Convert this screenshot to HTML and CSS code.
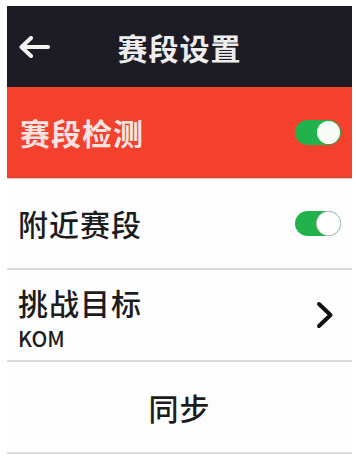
FILE: index.html
```html
<!DOCTYPE html>
<html lang="zh-CN">
<head>
<meta charset="utf-8">
<link rel="stylesheet" href="styles.css">
</head>
<body>
<div class="screen">
  <div class="header">
    <div class="back">
      <svg width="32" height="22" viewBox="0 0 32 22"><path d="M30 11H4M13 2L3.5 11L13 20" fill="none" stroke="#f2f2f2" stroke-width="4" stroke-linecap="round" stroke-linejoin="round"/></svg>
    </div>
    <div class="title">赛段设置</div>
    <div></div>
  </div>
  <div class="row row-active">
    <span class="label">赛段检测</span>
    <span class="toggle"><span class="knob"></span></span>
  </div>
  <div class="row">
    <span class="label">附近赛段</span>
    <span class="toggle"><span class="knob knob-ring"></span></span>
  </div>
  <div class="row row-chevron">
    <div class="stack">
      <span class="label">挑战目标</span>
      <span class="sub">KOM</span>
    </div>
    <svg width="18" height="28" viewBox="0 0 18 28"><path d="M3 3L14.5 14L3 25" fill="none" stroke="#111" stroke-width="4" stroke-linecap="round" stroke-linejoin="round"/></svg>
  </div>
  <div class="row row-center">
    <span class="label">同步</span>
  </div>
</div>
</body>
</html>
```
FILE: styles.css
```css
html, body {
  margin: 0;
  padding: 0;
  background: #ffffff;
}
body {
  font-family: "Noto Sans CJK SC", "Noto Sans", sans-serif;
}
.screen {
  margin: 6px 0 0 7px;
  width: 345px;
  background: #fdfdfd;
}
.header {
  height: 81px;
  background: #1d1c24;
  display: grid;
  grid-template-columns: 1fr auto 1fr;
  align-items: center;
}
.back {
  padding-left: 11px;
  display: flex;
  align-items: center;
}
.title {
  color: #ededed;
  font-size: 30px;
  font-weight: 700;
  line-height: 36px;
  letter-spacing: 1px;
}
.row {
  height: 90px;
  border-bottom: 2px solid #dcdcdc;
  display: flex;
  align-items: center;
  justify-content: space-between;
  padding: 0 11px 0 11px;
}
.row-active {
  height: 90px;
  background: #f4412d;
  border-bottom: 1px solid #c9473a;
  box-shadow: 0 1px 0 #f7c9bd;
  padding-left: 13px;
}
.row-active .label {
  color: #f7e4e2;
  font-weight: 700;
}
.label {
  font-size: 30px;
  font-weight: 500;
  line-height: 36px;
  color: #1c1c1c;
  letter-spacing: 1px;
}
.toggle {
  width: 46px;
  height: 25px;
  border-radius: 13px;
  background: #21b24b;
  display: flex;
  align-items: center;
  justify-content: flex-end;
  padding: 0 1px;
  box-sizing: border-box;
}
.knob {
  width: 23px;
  height: 23px;
  border-radius: 50%;
  background: #f8fbf6;
}
.knob-ring {
  box-shadow: 0 0 0 1px #b9c5bb;
  background: #ffffff;
}
.row-chevron {
  padding-right: 18px;
}
.stack {
  display: flex;
  flex-direction: column;
  padding-top: 4px;
}
.sub {
  font-size: 21px;
  line-height: 24px;
  font-weight: 500;
  color: #1c1c1c;
  margin-top: 6px;
}
.row-center {
  justify-content: center;
}
```
